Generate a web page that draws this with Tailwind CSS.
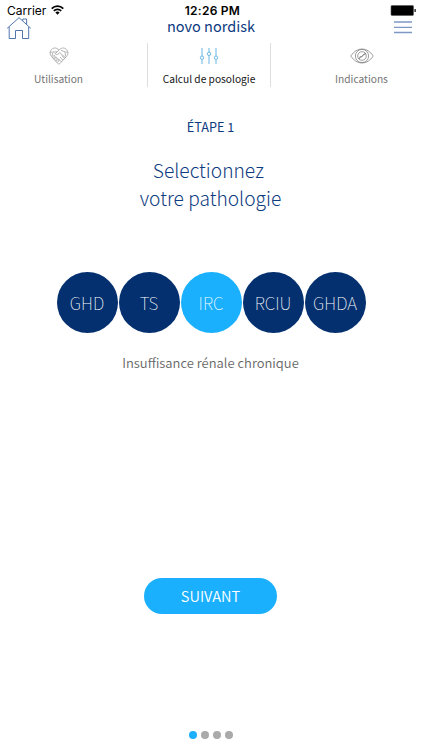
<!DOCTYPE html>
<html lang="fr">
<head>
<meta charset="utf-8">
<title>Calcul de posologie</title>
<script src="https://cdn.jsdelivr.net/npm/@tailwindcss/browser@4"></script>
</head>
<body class="bg-white">
<div class="relative mx-auto flex h-[750px] w-[422px] flex-col overflow-hidden bg-white font-['Noto_Sans_CJK_SC','Source_Sans_Pro',sans-serif] whitespace-nowrap">
  <div class="grid h-[18px] shrink-0 grid-cols-3 items-start pt-[4px] pr-[5px] pl-[7px] font-['Inter',sans-serif] text-black">
    <div class="flex gap-[5px]">
      <span class="text-[12px] leading-[14px]">Carrier</span>
      <svg class="mt-px h-[10px] w-[13px]" viewBox="0 0 13 10" fill="none" stroke="#000" stroke-width="1.7"><path d="M.7 3.6a8.2 8.2 0 0 1 11.6 0M2.8 5.9a5.2 5.2 0 0 1 7.4 0"/><path d="M6.5 9.7 4.4 7.5a3 3 0 0 1 4.2 0z" fill="#000" stroke="none"/></svg>
    </div>
    <span class="pl-px text-center text-[12px] leading-[14px] font-semibold tracking-[0.25px]">12:26 PM</span>
    <svg class="mt-px h-[11px] w-[27px] justify-self-end" viewBox="0 0 27 11"><rect x="1" y=".5" width="22.5" height="10" rx="1" fill="#000" stroke="#555" stroke-width=".6"/><path d="M24.5 4h1.2v3h-1.2z"/></svg>
  </div>
  <header class="grid h-[25px] shrink-0 grid-cols-[60px_1fr_60px] text-[#0d3b80]">
    <svg class="-mt-[2px] ml-[6px] h-[25px] w-[26px]" viewBox="0 0 26 25" fill="none" stroke="#3d67a5" stroke-width=".9"><path d="M1.2 12.3 13 1.7l11.8 10.6M3.2 11v11.5h6.3v-8h7v8h6.2V11M16.8 4.7V3h3.8v5.2"/></svg>
    <h1 class="text-center text-[14.5px] leading-[16px]">novo nordisk</h1>
    <svg class="mt-[3px] mr-[10px] h-[13px] w-[18px] justify-self-end" viewBox="0 0 18 13" stroke="#7d98c3" stroke-width="1.3"><path d="M0 1h18M0 6.3h18M0 11.5h18"/></svg>
  </header>
  <nav class="flex h-[44px] shrink-0 text-[10.2px] leading-4 text-[#747474]">
    <div class="flex w-[147px] flex-col items-center pr-[30px]">
      <svg class="mt-[4px] h-[19px] w-[20px]" viewBox="0 0 20 19" fill="none" stroke="#8b8b8b" stroke-width=".65" stroke-linejoin="round"><path d="M10 3C7.8.6 4.6.3 2.6 2.4.5 4.6.8 7.5 2.5 9.4l6.2 7c.8 1 1.8.8 2.3 0l6.5-7c1.8-2 2-4.9-.1-7C15.3.3 12.2.6 10 3zM1.3 5.5l2-.7M18.7 5.5l-2-.7M10 3 6.3 6.5c.3 1.4 1.8 1.4 3 .3l1.5-1.1 5.4 4.7M8 4.9 4 5l-1 4M12 3.3l4 1.5.6 4.6M12.8 8.5l2.7 3M11 10l3 3.1M9.3 11.6l3 3.3M3.3 10.3l1.7-2 1.2 1-1.8 2.2M5.1 12.2l2-2.2 1.2 1.1-2 2.3M7.1 14.3l1.7-1.9 1.2 1-1.5 2"/></svg>
      <span class="mt-[5px]">Utilisation</span>
    </div>
    <div class="flex w-[124px] flex-col items-center border-x border-[#dedede] text-[#151515]">
      <svg class="mt-[4px] h-[18px] w-[20px]" viewBox="0 0 20 18" fill="none" stroke="#68b6e5" stroke-width="1"><path d="M3 1v8M3 12.5V17M10 1v4M10 8.5V17M17 1v8M17 12.5V17"/><circle cx="3" cy="10.7" r="1.7"/><circle cx="10" cy="6.8" r="1.7"/><circle cx="17" cy="10.7" r="1.7"/></svg>
      <span class="mt-[6px]">Calcul de posologie</span>
    </div>
    <div class="flex flex-1 flex-col items-center pl-[30px]">
      <svg class="mt-[5px] h-[16px] w-[24px]" viewBox="0 0 24 16" fill="none" stroke="#7d7d7d" stroke-width=".75"><path d="M.7 8Q5.5 1 12 1t11.3 7Q18.5 15 12 15T.7 8z"/><circle cx="12" cy="8" r="6.6"/><circle cx="12" cy="8" r="4.3"/><path d="m8.8 11 1.3-2.5 2 .2 1-2 2-.2.5-1.7M9.2 10.8l6-5.4"/></svg>
      <span class="mt-[7px]">Indications</span>
    </div>
  </nav>
  <main class="flex flex-1 flex-col items-center pr-px text-[#0d3b80]">
    <p class="mt-[30px] text-[12.7px] leading-5">ÉTAPE 1</p>
    <h2 class="mt-[19px] text-center text-[19.2px] leading-[28px] font-light">Selectionnez&nbsp;<br>votre pathologie</h2>
    <div class="mt-[60px] flex gap-px pl-px text-[17px] font-thin text-white">
      <div class="flex size-[61px] items-center justify-center rounded-full bg-[#04306f]">GHD</div>
      <div class="flex size-[61px] items-center justify-center rounded-full bg-[#04306f]">TS</div>
      <div class="flex size-[61px] items-center justify-center rounded-full bg-[#1ab0fd]">IRC</div>
      <div class="flex size-[61px] items-center justify-center rounded-full bg-[#04306f]">RCIU</div>
      <div class="flex size-[61px] items-center justify-center rounded-full bg-[#04306f]">GHDA</div>
    </div>
    <p class="mt-[20px] text-[13px] leading-5 font-[350] text-[#666]">Insuffisance rénale chronique</p>
    <button class="mt-[205px] h-[36px] w-[133px] rounded-full bg-[#1ab0fd] text-[14.6px] leading-[36px] font-[350] text-white">SUIVANT</button>
  </main>
  <footer class="flex h-[19px] shrink-0 justify-center gap-[4px] pr-px">
    <i class="size-[8px] rounded-full bg-[#1ab0fd]"></i><i class="size-[8px] rounded-full bg-[#aaa]"></i><i class="size-[8px] rounded-full bg-[#aaa]"></i><i class="size-[8px] rounded-full bg-[#aaa]"></i>
  </footer>
</div>
</body>
</html>
